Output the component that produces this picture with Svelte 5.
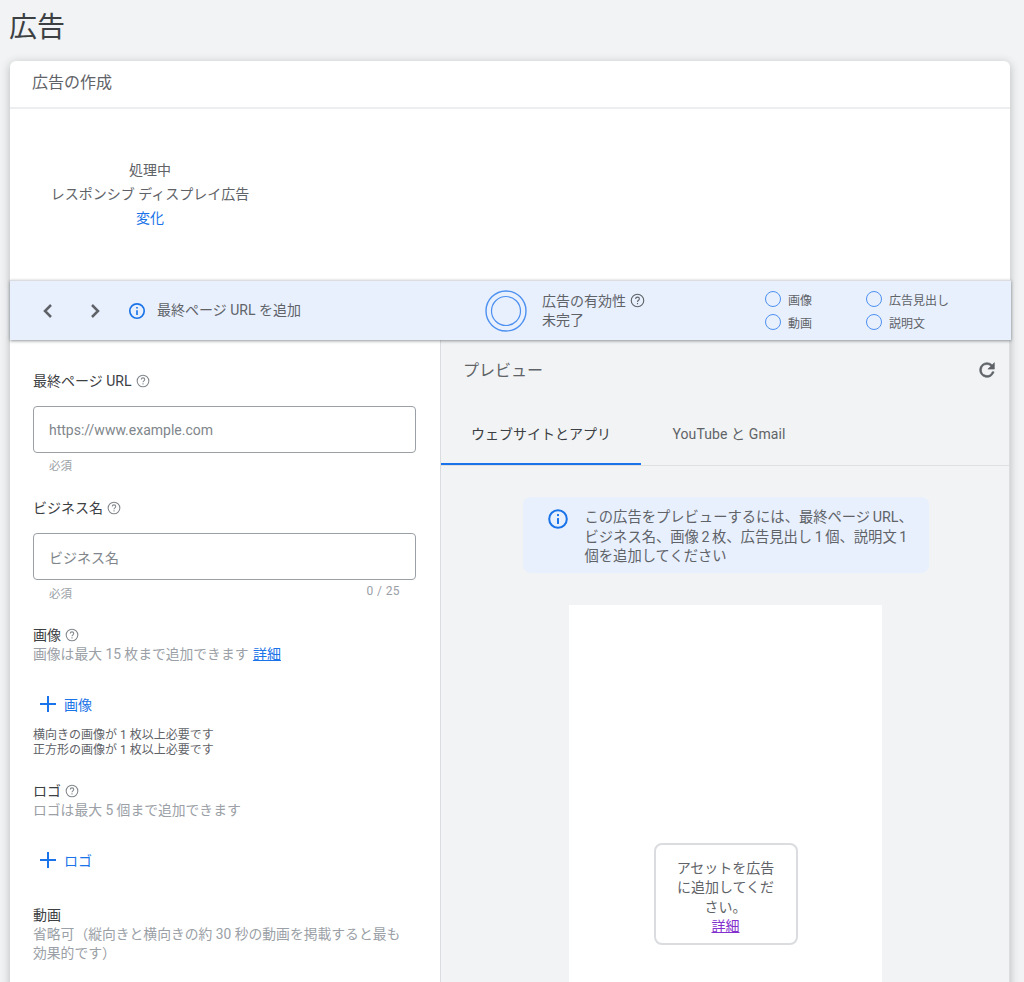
<script>
  const checks = [
    ['画像', '広告見出し'],
    ['動画', '説明文']
  ];
  const tabs = ['ウェブサイトとアプリ', 'YouTube と Gmail'];
</script>

{#snippet help(size = 14)}
  <svg class="help" width={size} height={size} viewBox="0 0 24 24" fill="none" stroke="currentColor" stroke-width="1.8">
    <circle cx="12" cy="12" r="10" />
    <path d="M9 9.6a3 3 0 0 1 6 0c0 2-3 2.2-3 4.6" />
    <path d="M12 16v2" />
  </svg>
{/snippet}

{#snippet info(size)}
  <svg width={size} height={size} viewBox="0 0 24 24" fill="none" stroke="#1a73e8" stroke-width="2.2">
    <circle cx="12" cy="12" r="9.6" />
    <path d="M12 11v6.4" />
    <path d="M12 6.6v2.2" />
  </svg>
{/snippet}

{#snippet plus()}
  <svg width="18" height="18" viewBox="0 0 18 18" stroke="#1a73e8" stroke-width="2" fill="none">
    <path d="M9 1v16M1 9h16" />
  </svg>
{/snippet}

<div class="page">
  <h1>広告</h1>
  <div class="card">
    <div class="card-head">広告の作成</div>
    <div class="ad-type">
      <div class="type-box">
        <div>処理中</div>
        <div>レスポンシブ ディスプレイ広告</div>
        <div class="change">変化</div>
      </div>
    </div>

    <div class="bar">
      <div class="bar-left">
        <svg class="chev" width="24" height="24" viewBox="0 0 24 24" fill="none" stroke="#5f6368" stroke-width="2.5"><path d="M15 6l-6 6 6 6" /></svg>
        <svg class="chev" width="24" height="24" viewBox="0 0 24 24" fill="none" stroke="#5f6368" stroke-width="2.5"><path d="M9 6l6 6-6 6" /></svg>
        {@render info(18)}
        <span class="bar-msg">最終ページ URL を追加</span>
      </div>
      <div class="strength">
        <svg width="42" height="42" viewBox="0 0 42 42" fill="none" stroke="#4d90f0">
          <circle cx="21" cy="21" r="20" stroke-width="1.4" />
          <circle cx="21" cy="21" r="14.5" stroke-width="1.2" />
        </svg>
        <div class="strength-text">
          <div>広告の有効性 {@render help(15)}</div>
          <div>未完了</div>
        </div>
      </div>
      <div class="checks">
        {#each checks as row}
          {#each row as item}
            <div class="check"><span class="ring"></span>{item}</div>
          {/each}
        {/each}
      </div>
    </div>

    <div class="columns">
      <div class="form">
        <div class="label first">最終ページ URL {@render help()}</div>
        <input class="field" placeholder="https://www.example.com" />
        <div class="hint">必須</div>

        <div class="label second">ビジネス名 {@render help()}</div>
        <input class="field name" placeholder="ビジネス名" />
        <div class="hint split"><span>必須</span><span class="count">0 / 25</span></div>

        <div class="label third">画像 {@render help()}</div>
        <div class="sub">画像は最大 15 枚まで追加できます <a href="#top">詳細</a></div>
        <div class="add">{@render plus()}<span>画像</span></div>
        <div class="note">横向きの画像が 1 枚以上必要です<br />正方形の画像が 1 枚以上必要です</div>

        <div class="label logo">ロゴ {@render help()}</div>
        <div class="sub">ロゴは最大 5 個まで追加できます</div>
        <div class="add">{@render plus()}<span>ロゴ</span></div>

        <div class="label video">動画</div>
        <div class="sub wrap">省略可（縦向きと横向きの約 30 秒の動画を掲載すると最も効果的です）</div>
      </div>

      <div class="preview">
        <div class="preview-head">
          <span>プレビュー</span>
          <svg class="reload" width="22" height="22" viewBox="0 0 24 24" fill="#5f6368" stroke="#5f6368" stroke-width="0.7"><path d="M17.65 6.35A7.96 7.96 0 0 0 12 4a8 8 0 1 0 7.73 10h-2.08A6 6 0 1 1 12 6c1.66 0 3.14.69 4.22 1.78L13 11h7V4l-2.35 2.35z" /></svg>
        </div>
        <div class="tabs">
          {#each tabs as tab, i}
            <div class="tab" class:active={i === 0}>{tab}</div>
          {/each}
        </div>
        <div class="preview-body">
          <div class="notice">
            <span class="notice-icon">{@render info(22)}</span>
            <p>この広告をプレビューするには、最終ページ URL、ビジネス名、画像 2 枚、広告見出し 1 個、説明文 1 個を追加してください</p>
          </div>
          <div class="canvas">
            <div class="empty">
              アセットを広告に追加してください。
              <a href="#top">詳細</a>
            </div>
          </div>
        </div>
      </div>
    </div>
  </div>
</div>

<style>
  :global(body) {
    margin: 0;
    background: #f1f3f4;
    font-family: Roboto, "Noto Sans CJK JP", sans-serif;
    color: #3c4043;
  }

  .page {
    height: 982px;
    overflow: hidden;
  }

  h1 {
    margin: 0;
    padding: 10px 0 0 9px;
    height: 51px;
    font-size: 28px;
    line-height: 36px;
    font-weight: 400;
    color: #3c4043;
  }

  .card {
    margin: 0 14px 0 10px;
    background: #fff;
    border-radius: 6px 6px 0 0;
    box-shadow: 0 2px 10px rgba(60, 64, 67, 0.32);
  }

  .card-head {
    height: 46px;
    line-height: 44px;
    padding-left: 22px;
    font-size: 16px;
    color: #5f6368;
    border-bottom: 2px solid #eceef0;
  }

  .ad-type {
    height: 171px;
  }

  .type-box {
    width: 280px;
    padding-top: 49px;
    text-align: center;
    font-size: 14px;
    line-height: 24px;
    color: #5f6368;
  }

  .change {
    color: #1a73e8;
  }

  .bar {
    position: relative;
    display: flex;
    align-items: center;
    height: 60px;
    margin-right: -1px;
    background: #e8f0fe;
    border-top: 1px solid #dadce0;
    box-sizing: border-box;
    box-shadow: 0 1px 3px rgba(60, 64, 67, 0.55);
    color: #5f6368;
  }

  .bar-left {
    display: flex;
    align-items: center;
    width: 475px;
    padding-left: 26px;
    box-sizing: border-box;
  }

  .chev {
    margin-right: 23px;
  }

  .chev + .chev {
    margin-right: 21px;
  }

  .bar-msg {
    margin-left: 11px;
    padding-bottom: 3px;
    font-size: 14px;
  }

  .strength {
    display: flex;
    align-items: center;
    gap: 15px;
    width: 280px;
    font-size: 14px;
    line-height: 19px;
  }

  .strength-text {
    color: #5f6368;
  }

  .help {
    vertical-align: -2px;
    margin-left: 1px;
    color: #80868b;
  }

  .strength .help {
    color: #5f6368;
  }

  .checks {
    display: grid;
    grid-template-columns: 101px auto;
    row-gap: 7px;
    font-size: 12px;
  }

  .check {
    display: flex;
    align-items: center;
    gap: 7px;
    height: 16px;
  }

  .ring {
    width: 14px;
    height: 14px;
    border: 1px solid #4d90f0;
    border-radius: 50%;
  }

  .columns {
    display: grid;
    grid-template-columns: 431px 1fr;
    background: #f1f3f4;
  }

  .form {
    background: #fff;
    padding: 0 24px 0 23px;
    border-right: 1px solid #dadce0;
    height: 642px;
  }

  .label {
    font-size: 14px;
    line-height: 20px;
    color: #3c4043;
  }

  .first {
    padding-top: 31px;
  }

  .second {
    padding-top: 24px;
  }

  .third {
    padding-top: 23px;
  }

  .logo {
    padding-top: 23px;
  }

  .video {
    padding-top: 35px;
  }

  .field {
    display: block;
    width: 100%;
    height: 47px;
    margin-top: 15px;
    padding: 0 15px;
    box-sizing: border-box;
    border: 1px solid #9aa0a6;
    border-radius: 4px;
    font: 14px Roboto, "Noto Sans CJK JP", sans-serif;
    outline: none;
  }

  .field.name {
    padding-top: 3px;
  }

  .field::placeholder {
    color: #80868b;
    opacity: 1;
  }

  .hint {
    padding: 6px 16px 0;
    font-size: 11.5px;
    line-height: 15px;
    color: #9aa0a6;
  }

  .split {
    display: flex;
    justify-content: space-between;
    padding-top: 7px;
  }

  .count {
    font-size: 12px;
    letter-spacing: 0.4px;
    margin-top: -3px;
  }

  .sub {
    font-size: 13.8px;
    line-height: 18px;
    color: #9aa0a6;
  }

  .sub a {
    font-size: 14px;
    margin-left: 1px;
  }

  .sub.wrap {
    line-height: 19px;
    max-width: 375px;
  }

  a {
    color: #1a73e8;
  }

  .add {
    display: flex;
    align-items: center;
    gap: 7px;
    height: 20px;
    margin: 31px 0 0 6px;
    font-size: 14px;
    color: #1a73e8;
  }

  .note {
    margin-top: 14px;
    font-size: 12px;
    line-height: 15px;
    color: #5f6368;
  }

  .preview {
    min-width: 0;
    box-shadow: inset -1px 0 0 #dadce0;
  }

  .preview-head {
    display: flex;
    justify-content: space-between;
    align-items: center;
    padding: 9px 12px 0 22px;
    height: 40px;
    font-size: 16px;
    color: #5f6368;
  }

  .reload {
    margin-top: 2px;
  }

  .tabs {
    display: flex;
    height: 77px;
    box-sizing: border-box;
    border-bottom: 1px solid #e0e0e0;
  }

  .tab {
    width: 200px;
    height: 76px;
    padding-top: 25px;
    line-height: 40px;
    box-sizing: border-box;
    text-align: center;
    font-size: 14px;
    color: #5f6368;
  }

  .tab.active {
    color: #3c4043;
    border-bottom: 2px solid #1a73e8;
  }

  .tab + .tab {
    width: 176px;
    letter-spacing: 0.1px;
  }

  .preview-body {
    display: flex;
    flex-direction: column;
    align-items: center;
    padding-top: 31px;
  }

  .notice {
    display: flex;
    width: 406px;
    box-sizing: border-box;
    padding: 11px 14px 6px 24px;
    background: #e8f0fe;
    border-radius: 8px;
    font-size: 14.3px;
    word-spacing: -1px;
    line-height: 19.5px;
    color: #5f6368;
  }

  .notice-icon {
    flex: none;
    width: 38px;
    height: 22px;
  }

  .notice p {
    margin: 0;
  }

  .canvas {
    position: relative;
    width: 313px;
    height: 400px;
    margin-top: 32px;
    background: #fff;
    display: flex;
    justify-content: center;
    align-items: flex-start;
  }

  .empty {
    width: 144px;
    box-sizing: border-box;
    margin-top: 238px;
    padding: 14px 20px 6px;
    background: #fff;
    border: 2px solid #dadce0;
    border-radius: 8px;
    text-align: center;
    font-size: 14px;
    line-height: 19.5px;
    color: #5f6368;
  }

  .empty a {
    display: block;
    color: #8430ce;
  }
</style>
